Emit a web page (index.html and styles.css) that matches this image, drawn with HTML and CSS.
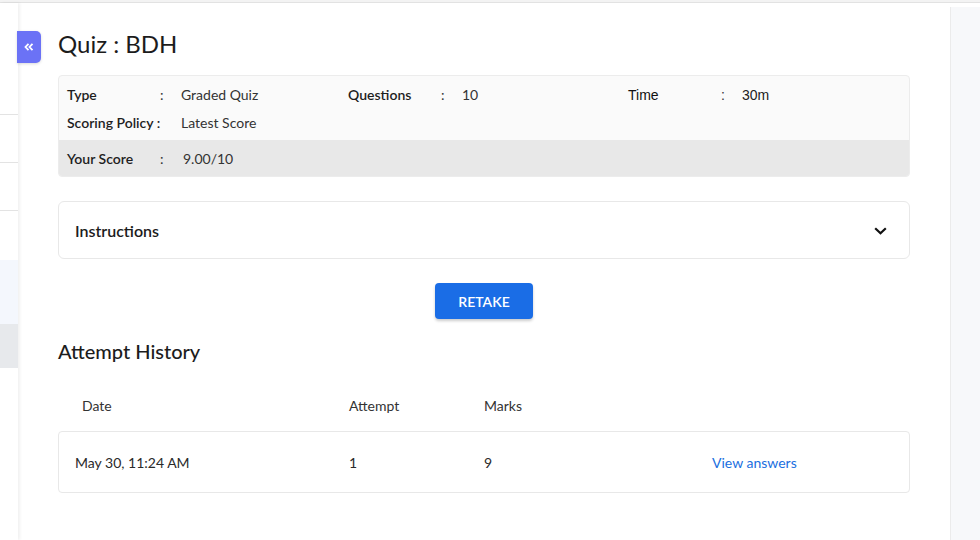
FILE: index.html
```html
<!DOCTYPE html>
<html>
<head>
<meta charset="utf-8">
<link rel="stylesheet" href="styles.css">
</head>
<body>
<div class="topbar"></div>
<div class="layout">
  <aside class="sidebar">
    <div class="side-gap"></div>
    <div class="side-item"></div>
    <div class="side-item"></div>
    <div class="side-item side-last"></div>
    <div class="side-item side-light"></div>
    <div class="side-item side-active"></div>
    <button class="collapse" aria-label="collapse">
      <svg width="10" height="8" viewBox="0 0 10 8"><polyline points="4.5,0.8 1.5,4 4.5,7.2" fill="none" stroke="#fff" stroke-width="1.8"/><polyline points="8.5,0.8 5.5,4 8.5,7.2" fill="none" stroke="#fff" stroke-width="1.8"/></svg>
    </button>
  </aside>
  <main class="content">
    <h1 class="title">Quiz : BDH</h1>
    <section class="info">
      <div class="info-top">
        <div class="info-grid">
          <div class="cell"><span class="lbl">Type</span><span class="col">:</span><span class="val">Graded Quiz</span></div>
          <div class="cell"><span class="lbl">Questions</span><span class="col">:</span><span class="val">10</span></div>
          <div class="cell arial"><span class="lbl">Time</span><span class="col">:</span><span class="val">30m</span></div>
          <div class="cell"><span class="lbl">Scoring Policy :</span><span class="col"></span><span class="val">Latest Score</span></div>
        </div>
      </div>
      <div class="score"><span class="lbl">Your Score</span><span class="col">:</span><span class="val">9.00/10</span></div>
    </section>
    <section class="instructions">
      <span>Instructions</span>
      <svg class="chev" width="13" height="8" viewBox="0 0 13 8"><polyline points="1.2,1.2 6.5,6.3 11.8,1.2" fill="none" stroke="#111" stroke-width="2.2"/></svg>
    </section>
    <div class="btn-wrap"><button class="retake">RETAKE</button></div>
    <h2 class="history">Attempt History</h2>
    <div class="thead">
      <span class="th-date">Date</span><span>Attempt</span><span>Marks</span><span></span>
    </div>
    <div class="trow">
      <span>May 30, 11:24 AM</span><span>1</span><span>9</span><a class="link">View answers</a>
    </div>
  </main>
  <div class="gutter"></div>
</div>
</body>
</html>
```
FILE: styles.css
```css
* { box-sizing: border-box; }
html, body { margin: 0; padding: 0; }
body {
  font-family: Lato, "Noto Sans", sans-serif;
  color: #222;
  background: #fff;
  width: 980px;
  height: 540px;
  overflow: hidden;
}
.topbar {
  height: 3px;
  background: #f3f3f3;
  border-bottom: 1px solid #e2e2e2;
}
.layout {
  display: flex;
  height: 537px;
}
.sidebar {
  position: relative;
  width: 18px;
  flex: none;
  background: #fff;
  box-shadow: 2px 0 3px rgba(0,0,0,0.06);
  z-index: 2;
  display: flex;
  flex-direction: column;
}
.side-gap { height: 112px; border-bottom: 1px solid #e3e3e3; }
.side-item { height: 48px; border-bottom: 1px solid #e3e3e3; }
.side-last { height: 49px; border-bottom: none; }
.side-light { background: #f4f7fd; height: 64px; border-bottom: none; }
.side-active { background: #e7e9ec; height: 44px; border-bottom: none; }
.collapse {
  position: absolute;
  left: 17px;
  top: 28px;
  width: 24px;
  height: 32px;
  border: none;
  padding: 0;
  background: #6b72f6;
  border-radius: 0 5px 5px 0;
  box-shadow: 0 1px 3px rgba(0,0,0,0.15);
  display: flex;
  align-items: center;
  justify-content: center;
}
.content {
  flex: 1;
  padding: 26px 40px 0 40px;
  background: #fff;
}
.title {
  margin: 0;
  font-weight: 400;
  font-size: 24px;
  line-height: 29px;
  color: #1c1c1c;
}
.info {
  margin-top: 17px;
  border: 1px solid #ececec;
  border-radius: 4px;
  background: #fafafa;
  overflow: hidden;
  font-size: 14px;
}
.info-top { padding: 9px 0 7px 8px; }
.info-grid {
  display: grid;
  grid-template-columns: 281px 280px 1fr;
  row-gap: 8px;
}
.cell { display: flex; line-height: 20px; }
.lbl { width: 93px; font-weight: 600; color: #1e1e1e; white-space: nowrap; }
.col { width: 21px; color: #333; }
.val { color: #333; }
.arial { font-family: "Liberation Sans", Arial, sans-serif; }
.arial .lbl { font-weight: 400; color: #111; }
.arial .val { color: #222; }
.score {
  display: flex;
  background: #e8e8e8;
  height: 36px;
  align-items: center;
  padding-left: 8px;
}
.score .col { width: 23px; }
.instructions {
  margin-top: 24px;
  height: 58px;
  border: 1px solid #e8e8e8;
  border-radius: 6px;
  display: flex;
  align-items: center;
  justify-content: space-between;
  padding: 1px 22px 0 16px;
  font-weight: 600;
  font-size: 16px;
  color: #1c1c1c;
}
.chev { margin-top: 0; }
.btn-wrap { display: flex; justify-content: center; margin-top: 24px; }
.retake {
  width: 98px;
  height: 36px;
  border: none;
  border-radius: 4px;
  background: #1a6de6;
  color: #fff;
  font-family: Lato, sans-serif;
  font-weight: 600;
  font-size: 14px;
  box-shadow: 0 2px 3px rgba(0,0,0,0.2);
}
.history {
  margin: 20px 0 0;
  font-weight: 500;
  font-size: 20px;
  line-height: 25px;
  color: #1c1c1c;
}
.thead, .trow {
  display: grid;
  grid-template-columns: 274px 135px 228px 1fr;
  font-size: 14px;
  color: #333;
}
.thead { margin-top: 32px; line-height: 20px; padding-left: 17px; }
.th-date { padding-left: 7px; }
.trow {
  margin-top: 15px;
  height: 62px;
  align-items: center;
  border: 1px solid #e8e8e8;
  border-radius: 4px;
  padding-left: 16px;
  color: #2a2a2a;
}
.link { color: #1a6fe0; }
.gutter {
  width: 30px;
  flex: none;
  background: #f7f8fa;
  border-left: 1px solid #ebebeb;
  margin-top: 4px;
}
```
